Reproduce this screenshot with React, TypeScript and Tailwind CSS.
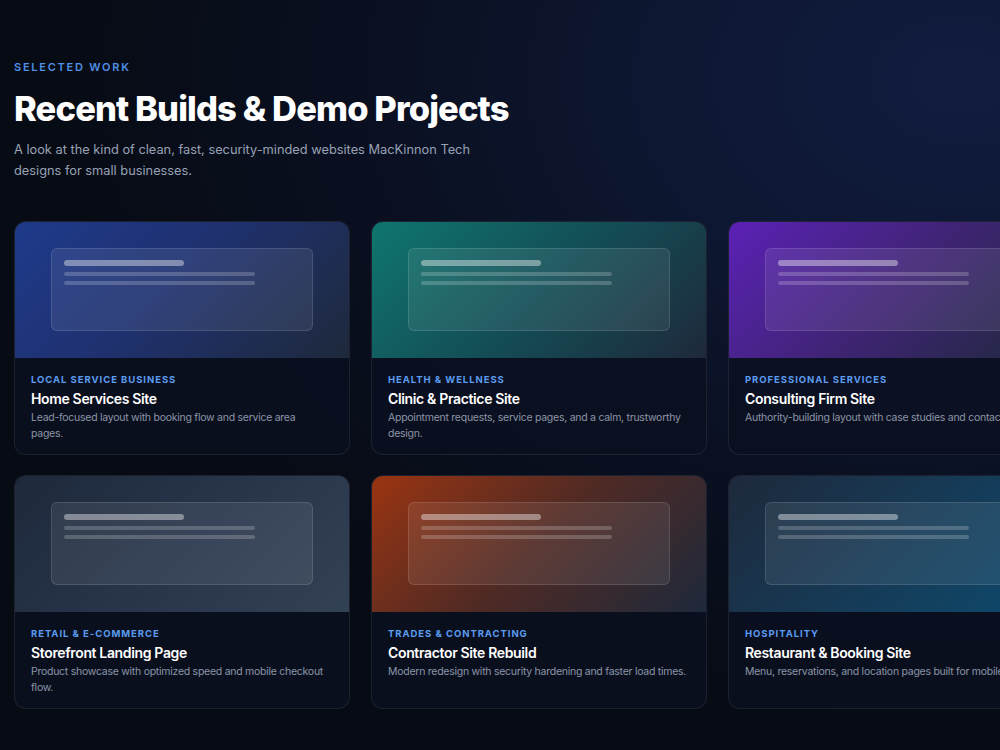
import React from "react";

type Project = {
  cat: string;
  title: string;
  desc: string;
  grad: string;
  descW: string;
};

const projects: Project[] = [
  {
    cat: "Local Service Business",
    title: "Home Services Site",
    desc: "Lead-focused layout with booking flow and service area pages.",
    grad: "bg-[linear-gradient(135deg,#1e3a8a_0%,#1f3170_45%,#1e293b_100%)]",
    descW: "w-[290px]",
  },
  {
    cat: "Health & Wellness",
    title: "Clinic & Practice Site",
    desc: "Appointment requests, service pages, and a calm, trustworthy design.",
    grad: "bg-[linear-gradient(135deg,#0f766e_0%,#134e57_50%,#1e293b_100%)]",
    descW: "w-[300px]",
  },
  {
    cat: "Professional Services",
    title: "Consulting Firm Site",
    desc: "Authority-building layout with case studies and contact.",
    grad: "bg-[linear-gradient(135deg,#5b21b6_0%,#3f2474_50%,#1e293b_100%)]",
    descW: "w-[300px]",
  },
  {
    cat: "Retail & E-Commerce",
    title: "Storefront Landing Page",
    desc: "Product showcase with optimized speed and mobile checkout flow.",
    grad: "bg-[linear-gradient(135deg,#1e293b_0%,#27344a_50%,#334155_100%)]",
    descW: "w-[300px]",
  },
  {
    cat: "Trades & Contracting",
    title: "Contractor Site Rebuild",
    desc: "Modern redesign with security hardening and faster load times.",
    grad: "bg-[linear-gradient(135deg,#9a3412_0%,#4f2a24_50%,#1e293b_100%)]",
    descW: "w-[300px]",
  },
  {
    cat: "Hospitality",
    title: "Restaurant & Booking Site",
    desc: "Menu, reservations, and location pages built for mobile.",
    grad: "bg-[linear-gradient(135deg,#1e293b_0%,#163a56_50%,#0c4a6e_100%)]",
    descW: "w-[300px]",
  },
];

function Card({ p }: { p: Project }) {
  return (
    <div className="w-[336px] h-[234px] shrink-0 rounded-[12px] border border-white/[0.08] bg-[#0b1020]/80 overflow-hidden flex flex-col">
      <div className={`h-[136px] ${p.grad} flex items-center justify-center`}>
        <div className="w-[262px] h-[83px] -mt-[1px] rounded-[6px] border border-white/[0.12] bg-white/[0.08] px-[12px] pt-[11px] flex flex-col">
          <div className="h-[6px] w-[120px] rounded-full bg-white/40" />
          <div className="h-[4px] w-[191px] rounded-full bg-white/20 mt-[6px]" />
          <div className="h-[4px] w-[191px] rounded-full bg-white/20 mt-[5px]" />
        </div>
      </div>
      <div className="px-[16px] pt-[15px] flex flex-col">
        <div className="text-[9.5px] leading-[13px] font-bold uppercase tracking-[0.1em] text-[#5b9cf0]">
          {p.cat}
        </div>
        <div className="mt-[3px] text-[14px] leading-[20px] font-semibold text-white tracking-[-0.025em] whitespace-nowrap">
          {p.title}
        </div>
        <div className={`mt-[1px] text-[10.5px] leading-[16px] tracking-[-0.025em] text-[#8b95a7] ${p.descW}`}>
          {p.desc}
        </div>
      </div>
    </div>
  );
}

export default function App() {
  return (
    <div
      className="min-h-screen w-full overflow-hidden bg-[#070b14] bg-[radial-gradient(ellipse_900px_650px_at_960px_80px,#111c40_0%,#0d1731_35%,#0a1021_65%,#070b14_100%)]"
      style={{ fontFamily: "Inter, 'Noto Sans', sans-serif" }}
    >
      <div className="pl-[14px] pt-[60px] pb-[40px]">
        <div className="text-[11px] leading-[14px] font-semibold uppercase tracking-[0.16em] text-[#4f8fe6]">
          Selected Work
        </div>
        <h1 className="mt-[14px] text-[34.5px] leading-[42px] font-extrabold tracking-[-0.025em] text-white">
          Recent Builds &amp; Demo Projects
        </h1>
        <p className="mt-[9px] w-[470px] text-[12.8px] leading-[21px] text-[#97a2b6]">
          A look at the kind of clean, fast, security-minded websites MacKinnon Tech designs for small businesses.
        </p>
        <div className="mt-[40px] grid grid-cols-[336px_336px_336px] gap-x-[21px] gap-y-[20px] w-[1050px]">
          {projects.map((p) => (
            <Card key={p.title} p={p} />
          ))}
        </div>
      </div>
    </div>
  );
}
